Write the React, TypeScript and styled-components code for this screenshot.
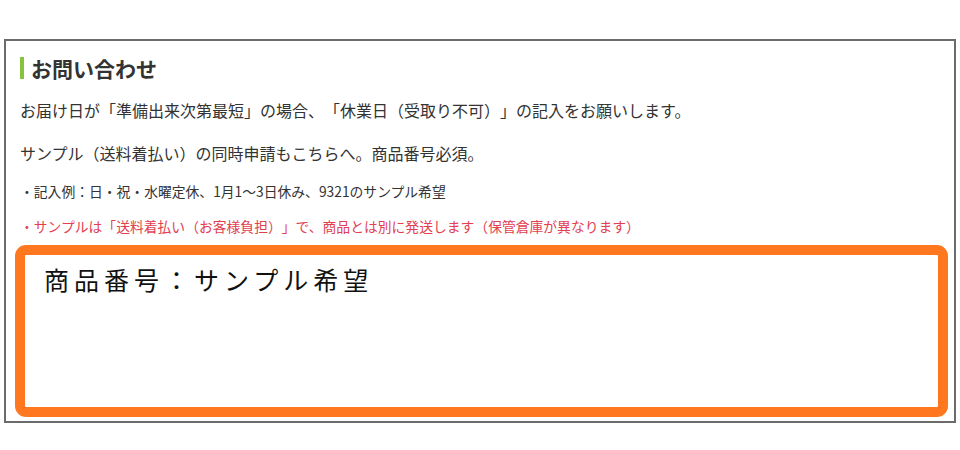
import styled, { createGlobalStyle } from 'styled-components';

const GlobalStyle = createGlobalStyle`
  html, body {
    margin: 0;
    padding: 0;
    background: #fff;
  }
  body {
    font-family: "Noto Sans CJK JP", "Noto Sans", sans-serif;
    color: #333;
    text-spacing-trim: space-all;
  }
`;

const Page = styled.div`
  padding: 39px 4px 0 4px;
`;

const Panel = styled.section`
  border: 2px solid #6b6b6b;
  padding: 0 6px 4px 9px;
`;

const Body = styled.div`
  padding-left: 5px;
`;

const Heading = styled.h2`
  margin: 16px 0 0 0;
  padding-left: 7px;
  border-left: 4px solid #86c440;
  font-size: 21px;
  font-weight: 700;
  line-height: 22px;
  color: #333;
`;

const Lead = styled.p<{ $top: number }>`
  margin: ${(p) => p.$top}px 0 0 0;
  font-size: 16px;
  line-height: 24px;
  color: #333;
`;

const Note = styled.p<{ $top: number; $warn?: boolean }>`
  margin: ${(p) => p.$top}px 0 0 0;
  font-size: 13.8px;
  line-height: 20px;
  color: ${(p) => (p.$warn ? '#e2404f' : '#333')};
`;

const Field = styled.textarea`
  display: block;
  box-sizing: border-box;
  width: 100%;
  height: 172px;
  margin-top: 9px;
  padding: 6px 10px 0 19px;
  border: 10px solid #ff7820;
  border-radius: 11px;
  outline: none;
  resize: none;
  background: #fff;
  font-family: "Noto Sans CJK JP", sans-serif;
  font-size: 25px;
  line-height: 37px;
  letter-spacing: 5px;
  color: #111;
  text-spacing-trim: space-all;
`;

export default function App() {
  return (
    <>
      <GlobalStyle />
      <Page>
        <Panel>
          <Body>
            <Heading>お問い合わせ</Heading>
            <Lead $top={19}>
              お届け日が「準備出来次第最短」の場合、「休業日（受取り不可）」の記入をお願いします。
            </Lead>
            <Lead $top={19}>サンプル（送料着払い）の同時申請もこちらへ。商品番号必須。</Lead>
            <Note $top={16}>・記入例：日・祝・水曜定休、1月1〜3日休み、9321のサンプル希望</Note>
            <Note $top={15} $warn>
              ・サンプルは「送料着払い（お客様負担）」で、商品とは別に発送します（保管倉庫が異なります）
            </Note>
          </Body>
          <Field readOnly defaultValue="商品番号：サンプル希望" />
        </Panel>
      </Page>
    </>
  );
}
